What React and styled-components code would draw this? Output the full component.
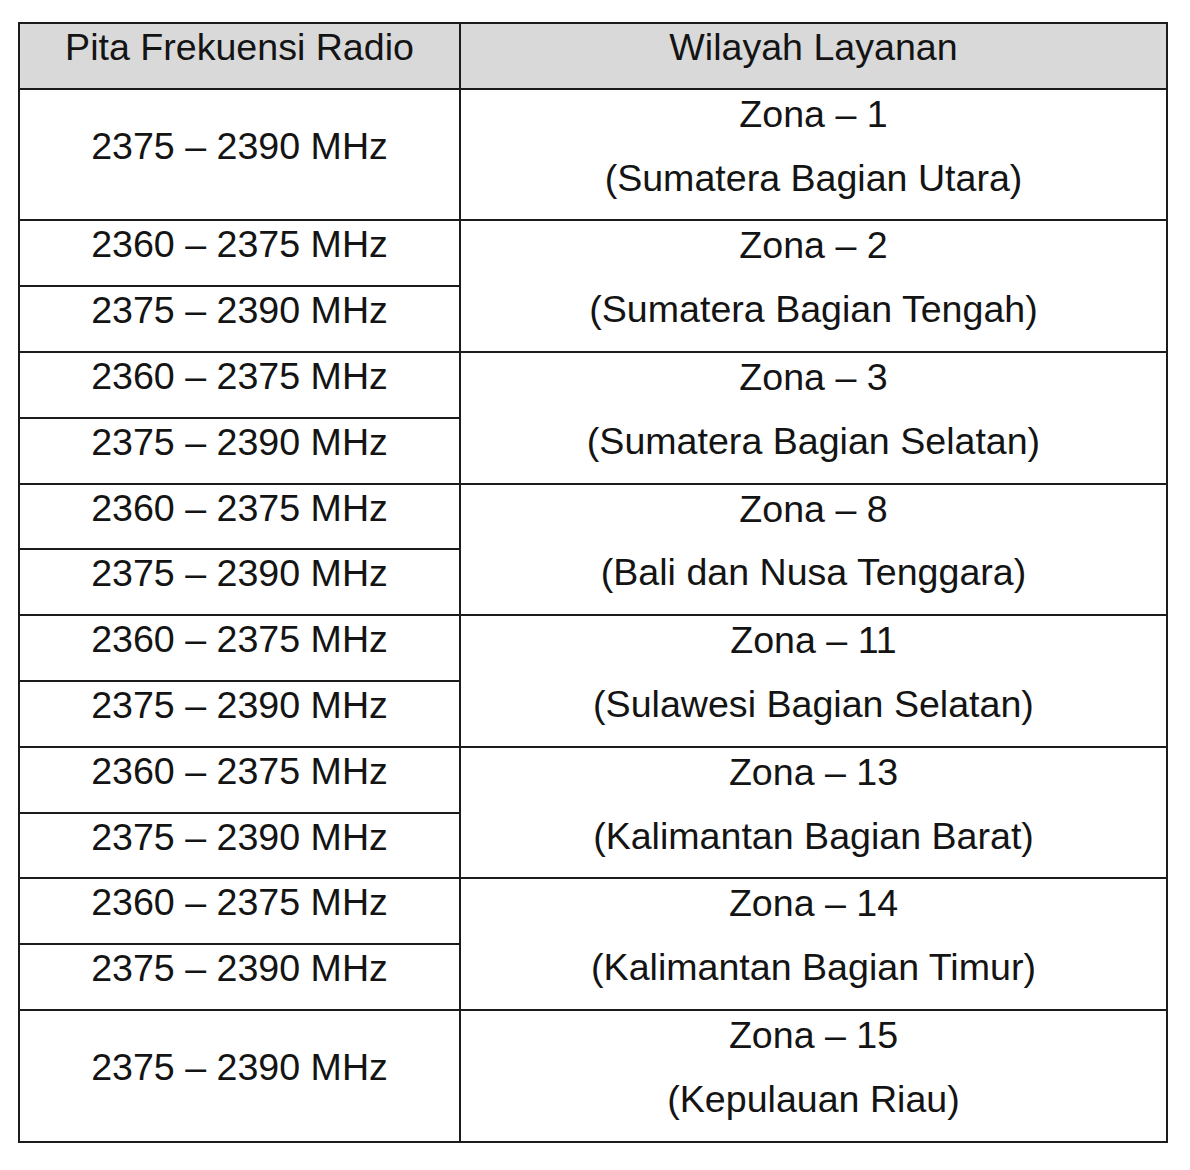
import styled, { createGlobalStyle } from 'styled-components';

const GlobalStyle = createGlobalStyle`
	html, body {
		margin: 0;
		padding: 0;
		background: #ffffff;
	}
	body {
		font-family: "Liberation Sans", Arial, sans-serif;
		color: #141414;
	}
`;

const Page = styled.div`
	padding: 22px 0 0 18px;
`;

const Table = styled.table`
	border-collapse: collapse;
	table-layout: fixed;
	width: 1150px;
	font-size: 37.6px;
`;

const HeadCell = styled.th`
	background: #d9d9d9;
	border: 2px solid #1c1c1c;
	font-weight: normal;
	text-align: center;
	vertical-align: middle;
	padding: 0;
`;

const Cell = styled.td`
	border: 2px solid #1c1c1c;
	text-align: center;
	vertical-align: middle;
	padding: 0;
`;

const Line = styled.div`
	line-height: 46px;
	padding-bottom: 17.8px;
	white-space: nowrap;
`;

const Stack = styled.div`
	padding: 1px 0;
`;

const ZONES = [
	{ zone: 'Zona – 1', area: '(Sumatera Bagian Utara)', bands: ['2375 – 2390 MHz'] },
	{ zone: 'Zona – 2', area: '(Sumatera Bagian Tengah)', bands: ['2360 – 2375 MHz', '2375 – 2390 MHz'] },
	{ zone: 'Zona – 3', area: '(Sumatera Bagian Selatan)', bands: ['2360 – 2375 MHz', '2375 – 2390 MHz'] },
	{ zone: 'Zona – 8', area: '(Bali dan Nusa Tenggara)', bands: ['2360 – 2375 MHz', '2375 – 2390 MHz'] },
	{ zone: 'Zona – 11', area: '(Sulawesi Bagian Selatan)', bands: ['2360 – 2375 MHz', '2375 – 2390 MHz'] },
	{ zone: 'Zona – 13', area: '(Kalimantan Bagian Barat)', bands: ['2360 – 2375 MHz', '2375 – 2390 MHz'] },
	{ zone: 'Zona – 14', area: '(Kalimantan Bagian Timur)', bands: ['2360 – 2375 MHz', '2375 – 2390 MHz'] },
	{ zone: 'Zona – 15', area: '(Kepulauan Riau)', bands: ['2375 – 2390 MHz'] },
];

function ZoneRows({ zone, area, bands }) {
	const region = (
		<Cell rowSpan={bands.length}>
			<Stack>
				<Line>{zone}</Line>
				<Line>{area}</Line>
			</Stack>
		</Cell>
	);

	return bands.map((band, i) => (
		<tr key={band}>
			<Cell>
				<Line>{band}</Line>
			</Cell>
			{i === 0 && region}
		</tr>
	));
}

export default function App() {
	return (
		<Page>
			<GlobalStyle />
			<Table>
				<colgroup>
					<col style={{ width: '441px' }} />
					<col />
				</colgroup>
				<thead>
					<tr>
						<HeadCell>
							<Line>Pita Frekuensi Radio</Line>
						</HeadCell>
						<HeadCell>
							<Line>Wilayah Layanan</Line>
						</HeadCell>
					</tr>
				</thead>
				<tbody>
					{ZONES.map((z) => (
						<ZoneRows key={z.zone} {...z} />
					))}
				</tbody>
			</Table>
		</Page>
	);
}
